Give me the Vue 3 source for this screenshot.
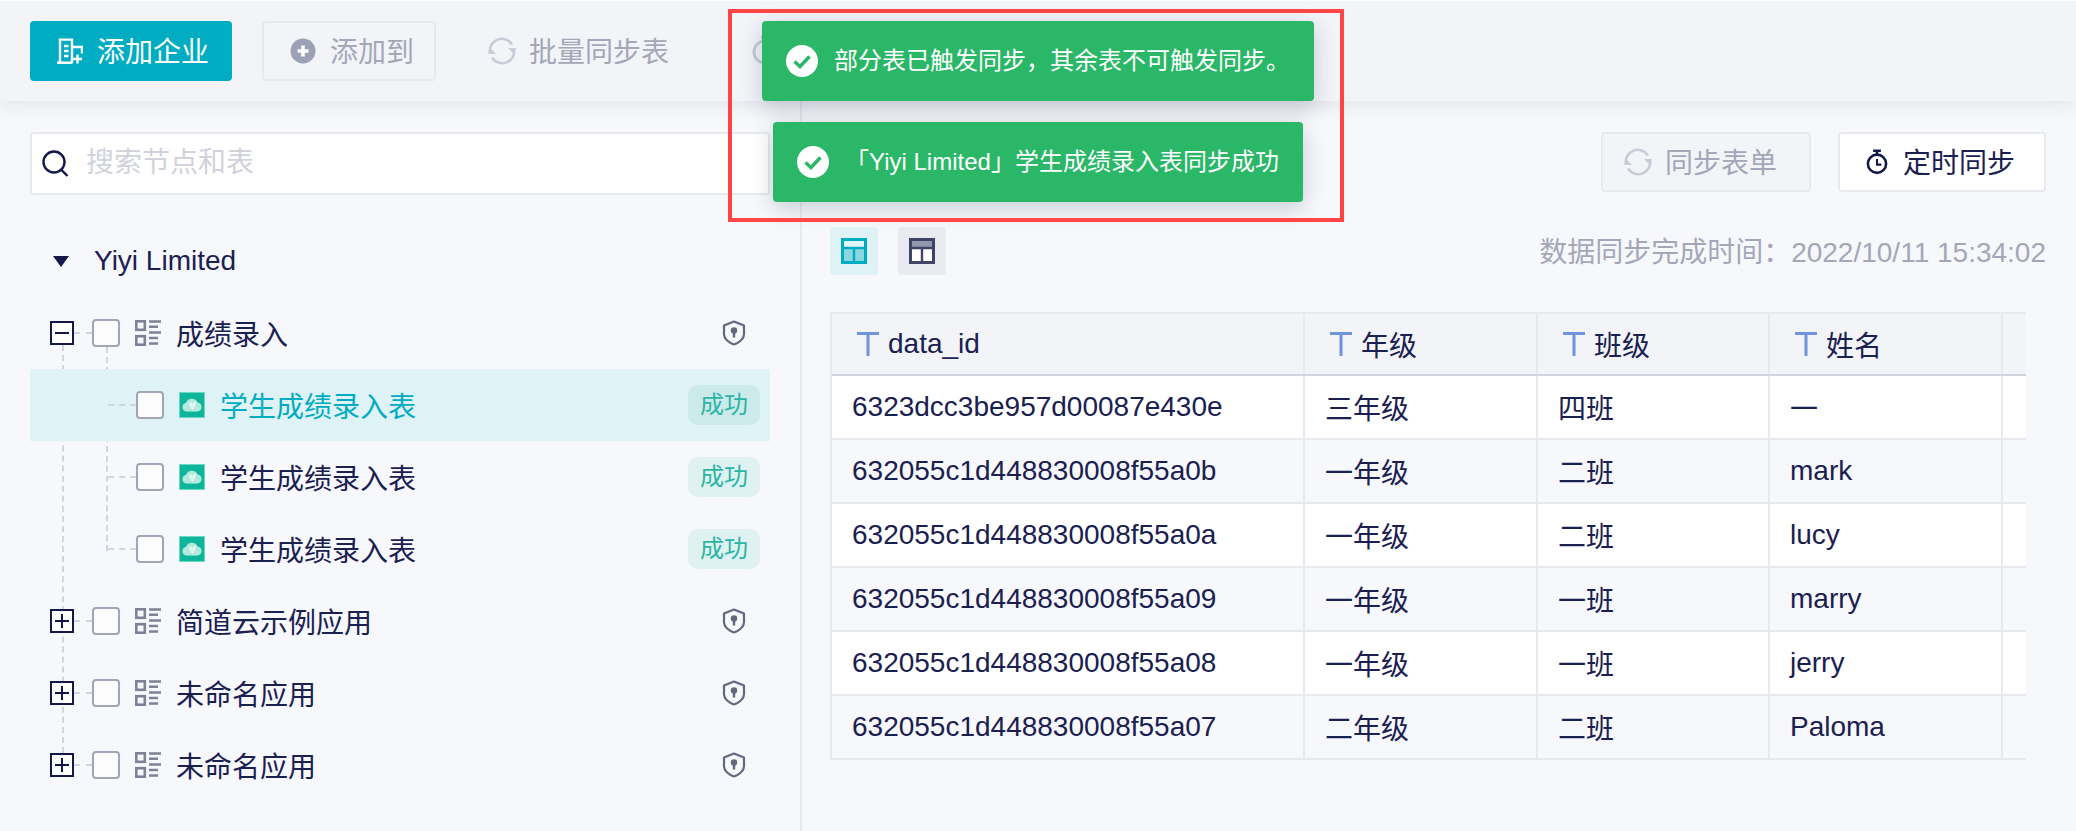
<script setup>
const tree = [
  { type: 'app', name: '成绩录入', open: true },
  { type: 'leaf', name: '学生成绩录入表', active: true },
  { type: 'leaf', name: '学生成绩录入表' },
  { type: 'leaf', name: '学生成绩录入表' },
  { type: 'app', name: '简道云示例应用' },
  { type: 'app', name: '未命名应用' },
  { type: 'app', name: '未命名应用' }
]
const columns = ['data_id', '年级', '班级', '姓名']
const rows = [
  ['6323dcc3be957d00087e430e', '三年级', '四班', '一'],
  ['632055c1d448830008f55a0b', '一年级', '二班', 'mark'],
  ['632055c1d448830008f55a0a', '一年级', '二班', 'lucy'],
  ['632055c1d448830008f55a09', '一年级', '一班', 'marry'],
  ['632055c1d448830008f55a08', '一年级', '一班', 'jerry'],
  ['632055c1d448830008f55a07', '二年级', '二班', 'Paloma']
]
const toasts = ['部分表已触发同步，其余表不可触发同步。', '「Yiyi Limited」学生成绩录入表同步成功']
const isCjk = (s) => /[^\x00-\x7f]/.test(s)
</script>

<template>
  <div class="page">
    <header class="toolbar">
      <button class="btn primary">
        <svg class="ico" viewBox="0 0 26 26" fill="none" stroke="#fff" stroke-width="2.4">
          <path d="M0 24.8h15.5M3 24.800V1.600h12v23" />
          <path d="M15 9h10v6.500" />
          <path d="M7 8h4.500M7 13h4.500M7 18h4.500" />
          <path d="M20.500 16.500v9M16 21h9" />
        </svg>
        <span>添加企业</span>
      </button>
      <button class="btn outline">
        <svg class="ico" viewBox="0 0 26 26">
          <circle cx="13" cy="13" r="12.500" fill="#9da1b5" />
          <path d="M13 7.500v11M7.500 13h11" stroke="#fff" stroke-width="3.600" />
        </svg>
        <span>添加到</span>
      </button>
      <div class="tool">
        <svg class="sync" viewBox="0 0 28 28" fill="none" stroke="#c9cbd6" stroke-width="2.600">
          <path d="M2 16A12 12 0 0 1 24 7.500" />
          <path d="M26 12A12 12 0 0 1 4 20.500" />
          <path d="M28 11l-8 0 5.500 5.500z" fill="#c9cbd6" stroke="none" />
          <path d="M0 17l8 0-5.500-5.500z" fill="#c9cbd6" stroke="none" />
        </svg>
        <span>批量同步表</span>
      </div>
      <svg class="hidden-watch" viewBox="0 0 26 30" fill="none" stroke="#c9cbd6" stroke-width="3">
        <circle cx="13" cy="17" r="11" />
        <path d="M9 2.500h8M13 2.500v4" />
      </svg>
    </header>

    <main class="main">
      <aside class="sidebar">
        <div class="search">
          <svg class="search-ico" viewBox="0 0 28 28" fill="none" stroke="#12184a" stroke-width="2.400">
            <circle cx="12" cy="12" r="10.500" />
            <path d="M19.500 20l6 6" />
          </svg>
          <span class="placeholder">搜索节点和表</span>
        </div>
        <div class="root">
          <i class="caret"></i>
          <span>Yiyi Limited</span>
        </div>
        <div class="tree">
          <i class="guide g1"></i>
          <i class="guide g2"></i>
          <div
            v-for="(node, i) in tree"
            :key="i"
            class="row"
            :class="[node.type, { active: node.active }]"
          >
            <svg v-if="node.type === 'app'" class="toggle" viewBox="0 0 24 24">
              <rect x="1" y="1" width="22" height="22" fill="#fff" stroke="#12184a" stroke-width="2" />
              <path d="M5 12h14" stroke="#12184a" stroke-width="2" />
              <path v-if="!node.open" d="M12 5v14" stroke="#12184a" stroke-width="2" />
            </svg>
            <i class="check"></i>
            <svg v-if="node.type === 'app'" class="node-ico" viewBox="0 0 26 26" fill="none">
              <rect x="1.300" y="1.300" width="8.500" height="8.500" stroke="#7d8298" stroke-width="2.600" />
              <rect x="1.300" y="16.200" width="8.500" height="8.500" stroke="#7d8298" stroke-width="2.600" />
              <path d="M14 1.500h12M14 6.800h9M14 12.500h12M14 18h9M14 23.500h9" stroke="#7d8298" stroke-width="2.400" />
            </svg>
            <svg v-else class="node-ico" viewBox="0 0 26 26">
              <rect x=".5" y=".5" width="25" height="25" fill="#0db59b" stroke="#6fd6c4" />
              <path d="M7.500 19.500a4.300 4.300 0 0 1-.6-8.500 6.200 6.200 0 0 1 11.600-.6 4.600 4.600 0 0 1 .2 9.100z" fill="#b3eadf" />
              <path d="M13.500 18.500L9.800 11.500Q12.500 9 13.500 12.500 15 9 17.500 10.500z" fill="#e4f8f4" />
            </svg>
            <span class="name">{{ node.name }}</span>
            <svg v-if="node.type === 'app'" class="shield" viewBox="0 0 24 26">
              <path d="M12 1.500l10 4v9c0 4.500-5 8.300-10 10-5-1.700-10-5.500-10-10v-9z" fill="none" stroke="#626880" stroke-width="2.200" stroke-linejoin="round" />
              <circle cx="12" cy="10.500" r="3.200" fill="#626880" />
              <path d="M10.800 11h2.400v6.500h-2.400z" fill="#626880" />
            </svg>
            <span v-else class="badge">成功</span>
          </div>
        </div>
      </aside>

      <section class="content">
        <div class="actions">
          <button class="btn action disabled">
            <svg class="sync" viewBox="0 0 28 28" fill="none" stroke="#c9cbd6" stroke-width="2.600">
              <path d="M2 16A12 12 0 0 1 24 7.500" />
              <path d="M26 12A12 12 0 0 1 4 20.500" />
              <path d="M28 11l-8 0 5.500 5.500z" fill="#c9cbd6" stroke="none" />
              <path d="M0 17l8 0-5.500-5.500z" fill="#c9cbd6" stroke="none" />
            </svg>
            <span>同步表单</span>
          </button>
          <button class="btn action timer">
            <svg class="ico" viewBox="0 0 26 30" fill="none" stroke="#12184a" stroke-width="3">
              <circle cx="13" cy="17" r="10.500" />
              <path d="M8.500 2h9M13 2v4" />
              <path d="M13 11.500V18h5" stroke-width="2.400" />
            </svg>
            <span>定时同步</span>
          </button>
        </div>
        <div class="meta">
          <div class="views">
            <div class="view on">
              <svg viewBox="0 0 26 26">
                <rect x="1.500" y="1.500" width="23" height="23" fill="#8cd6e0" stroke="#00acc1" stroke-width="3" />
                <rect x="3" y="3" width="20" height="6" fill="#e2f5f8" />
                <path d="M1.500 10h23M13 10v14" stroke="#00acc1" stroke-width="2.400" />
              </svg>
            </div>
            <div class="view">
              <svg viewBox="0 0 26 26">
                <rect x="1.500" y="1.500" width="23" height="23" fill="#fff" stroke="#3f4468" stroke-width="3" />
                <rect x="3" y="3" width="20" height="6" fill="#9498ad" />
                <path d="M1.500 10h23M13 10v14" stroke="#3f4468" stroke-width="2.400" />
              </svg>
            </div>
          </div>
          <span class="time">数据同步完成时间：2022/10/11 15:34:02</span>
        </div>
        <div class="table">
          <div class="tr head">
            <div v-for="c in columns" :key="c" class="cell">
              <svg class="t-ico" viewBox="0 0 22 24">
                <path d="M0 1.500h22M11 1.500V24" fill="none" stroke="#6f94dd" stroke-width="3" />
              </svg>
              <span :class="{ cjk: isCjk(c) }">{{ c }}</span>
            </div>
            <div class="cell"></div>
          </div>
          <div v-for="(r, i) in rows" :key="i" class="tr" :class="{ odd: i % 2 === 0 }">
            <div v-for="(v, j) in r" :key="j" class="cell">
              <span :class="{ cjk: isCjk(v) }">{{ v }}</span>
            </div>
            <div class="cell"></div>
          </div>
        </div>
      </section>
    </main>

    <div class="toasts">
      <div v-for="t in toasts" :key="t" class="toast">
        <svg class="toast-ico" viewBox="0 0 32 32">
          <circle cx="16" cy="16" r="16" fill="#fff" />
          <path d="M8.500 16.500l5.500 5 9.500-10" fill="none" stroke="#2ab768" stroke-width="3.400" />
        </svg>
        <span>{{ t }}</span>
      </div>
    </div>
    <div class="frame"></div>
  </div>
</template>

<style>
html, body { margin: 0; background: #f7f8fb; }
</style>

<style scoped>
.page {
  position: relative;
  width: 2076px;
  height: 831px;
  overflow: hidden;
  background: #f7f8fb;
  color: #1a2050;
  font: 28px/1.2 "Liberation Sans", "Noto Sans CJK SC", sans-serif;
}
.toolbar {
  position: relative;
  z-index: 1;
  box-sizing: border-box;
  height: 101px;
  padding: 20px 0 0 30px;
  display: flex;
  align-items: flex-start;
  background: #f2f4f8;
  border-top: 1px solid #fafbfd;
  box-shadow: 0 4px 18px rgba(20, 28, 70, .09);
}
.btn {
  box-sizing: border-box;
  height: 60px;
  display: flex;
  align-items: center;
  border: 2px solid transparent;
  border-radius: 4px;
  background: none;
  font: inherit;
  color: inherit;
  padding: 0;
}
.btn span, .tool span { padding-top: 3px; }
.ico { width: 26px; height: 26px; flex: none; }
.sync { width: 28px; height: 28px; flex: none; }
.primary {
  width: 202px;
  padding-left: 25px;
  gap: 14px;
  background: #00acc1;
  border-color: #00acc1;
  color: #fff;
}
.outline {
  width: 174px;
  margin-left: 30px;
  padding-left: 26px;
  gap: 14px;
  border-color: #e8e9ee;
  color: #a4a7b8;
}
.tool {
  height: 60px;
  margin-left: 52px;
  display: flex;
  align-items: center;
  gap: 13px;
  color: #a4a7b8;
}
.hidden-watch {
  width: 26px;
  height: 30px;
  margin: 14px 0 0 83px;
}
.main { display: flex; height: 730px; }
.sidebar {
  box-sizing: border-box;
  width: 802px;
  padding: 31px 30px 0;
  border-right: 2px solid #e8e9ee;
  flex: none;
}
.search {
  box-sizing: border-box;
  height: 63px;
  padding-left: 10px;
  display: flex;
  align-items: center;
  gap: 16px;
  background: #fff;
  border: 2px solid #e8e9ee;
  border-radius: 4px;
}
.search-ico { width: 28px; height: 28px; }
.placeholder { color: #d0d2dc; margin-bottom: 2px; }
.root {
  height: 72px;
  margin-top: 30px;
  display: flex;
  align-items: center;
  padding-left: 23px;
}
.caret {
  width: 0;
  height: 0;
  margin-right: 25px;
  border: 8px solid transparent;
  border-top: 11px solid #12184a;
  border-bottom: 0;
}
.tree { position: relative; }
.guide { position: absolute; width: 0; border-left: 2px dashed #d3d5de; }
.g1 { left: 32px; top: 48px; height: 408px; }
.g2 { left: 76px; top: 50px; height: 204px; }
.row {
  position: relative;
  height: 72px;
  display: flex;
  align-items: center;
  padding-right: 10px;
}
.row::before {
  content: "";
  position: absolute;
  top: 35px;
  border-top: 2px dashed #d3d5de;
}
.row.app { padding-left: 20px; padding-right: 24px; }
.row.app::before { left: 44px; width: 18px; }
.row.leaf { padding-left: 106px; }
.row.leaf::before { left: 78px; width: 28px; }
.active { background: #dff2f5; }
.toggle { position: relative; width: 24px; height: 24px; margin-right: 18px; flex: none; }
.check {
  position: relative;
  box-sizing: border-box;
  width: 28px;
  height: 28px;
  flex: none;
  border: 2px solid #a0a5b8;
  border-radius: 4px;
  background: #fcfcfd;
}
.node-ico { width: 26px; height: 26px; margin: 0 15px; flex: none; }
.name { flex: 1; padding-top: 6px; }
.active .name { color: #00acc1; }
.shield { width: 24px; height: 26px; }
.badge {
  width: 72px;
  height: 40px;
  line-height: 40px;
  text-align: center;
  font-size: 24px;
  color: #2bb5a5;
  background: #dff2f1;
  border-radius: 10px;
}
.active .badge { background: #cceaea; }
.content {
  flex: 1;
  min-width: 0;
  padding: 31px 30px 0 28px;
}
.actions { display: flex; justify-content: flex-end; gap: 27px; }
.action { width: 208px; gap: 13px; }
.disabled { width: 210px; padding-left: 21px; background: #f2f4f8; border-color: #e8e9ee; color: #a4a7b8; }
.timer { padding-left: 24px; background: #fff; border-color: #e8e9ee; }
.meta {
  height: 48px;
  margin-top: 35px;
  display: flex;
  justify-content: space-between;
  align-items: center;
}
.views { display: flex; gap: 20px; }
.view {
  width: 48px;
  height: 48px;
  display: flex;
  align-items: center;
  justify-content: center;
  background: #e9ebf0;
  border-radius: 4px;
}
.view.on { background: #dff2f5; }
.view svg { width: 26px; height: 26px; }
.time { color: #a4a7b8; margin-top: 3px; }
.table {
  box-sizing: border-box;
  width: 1196px;
  margin-top: 37px;
  border-top: 2px solid #e8e9ee;
  border-left: 2px solid #e8e9ee;
}
.tr {
  display: grid;
  grid-template-columns: 473px 233px 232px 233px 23px;
  height: 64px;
  border-bottom: 2px solid #e8e9ee;
  box-sizing: border-box;
}
.tr.odd { background: #fff; }
.head { height: 62px; background: #f2f4f8; border-bottom-color: #d3d5de; }
.cell {
  box-sizing: border-box;
  display: flex;
  align-items: center;
  padding-left: 20px;
  border-right: 2px solid #e8e9ee;
  white-space: nowrap;
}
.cjk { margin-top: 5px; }
.head .cell { padding-left: 25px; gap: 9px; }
.cell:last-child { border-right: 0; padding: 0; }
.t-ico { width: 22px; height: 24px; flex: none; }
.toasts {
  position: absolute;
  z-index: 2;
  top: 21px;
  left: 0;
  right: 0;
  display: flex;
  flex-direction: column;
  align-items: center;
  gap: 21px;
}
.toast {
  height: 80px;
  padding: 0 24px;
  display: flex;
  align-items: center;
  gap: 16px;
  font-size: 24px;
  color: #fff;
  background: #2ab768;
  border-radius: 4px;
  box-shadow: 0 6px 22px rgba(20, 28, 70, .2);
}
.toast-ico { width: 32px; height: 32px; flex: none; }
.frame {
  position: absolute;
  z-index: 3;
  left: 728px;
  top: 9px;
  box-sizing: border-box;
  width: 616px;
  height: 213px;
  border: 4px solid #ff4545;
}
</style>
